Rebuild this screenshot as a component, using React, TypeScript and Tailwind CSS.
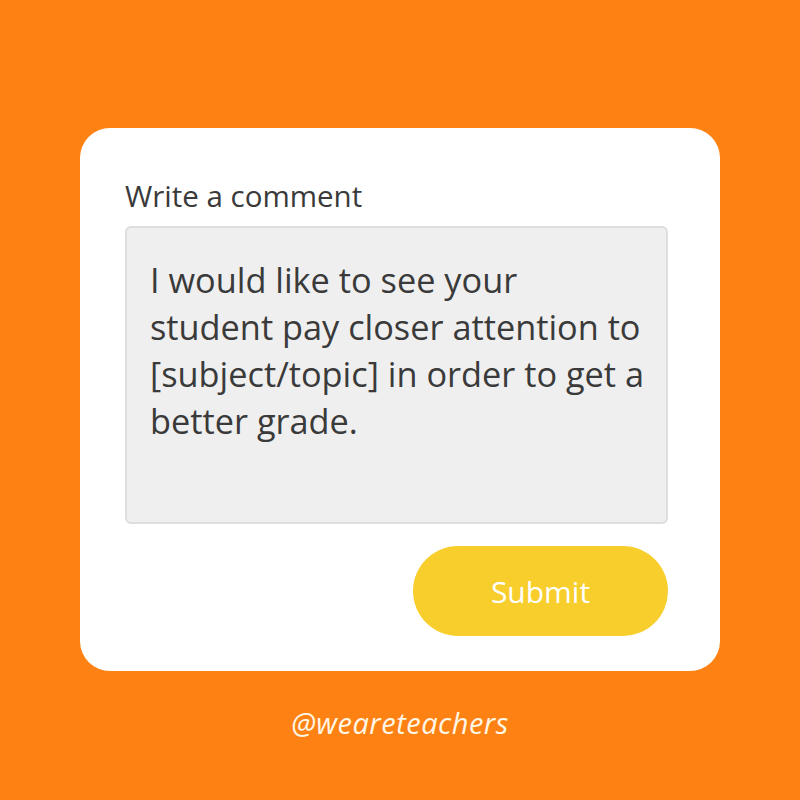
export default function App() {
  return (
    <div
      className="w-[800px] h-[800px] bg-[#fd8213] flex flex-col items-center pt-[128px]"
      style={{ fontFamily: '"Open Sans", "Liberation Sans", sans-serif' }}
    >
      <div className="w-[640px] h-[543px] bg-white rounded-[30px] pl-[45px] pr-[52px] pt-[50px] flex flex-col">
        <label className="text-[29.5px] leading-[36px] text-[#3a3a3a]">Write a comment</label>
        <div className="mt-[12px] h-[298px] bg-[#efefef] border-2 border-[#dedede] rounded-[6px] pl-[23px] pr-[10px] pt-[28px]">
          <p className="text-[34.3px] leading-[47px] text-[#3a3a3a] whitespace-nowrap">
            I would like to see your
            <br />
            student pay closer attention to
            <br />
            [subject/topic] in order to get a
            <br />
            better grade.
          </p>
        </div>
        <div className="flex justify-end mt-[22px]">
          <button className="w-[255px] h-[90px] rounded-full bg-[#f8ce2d] text-white text-[30px]">
            Submit
          </button>
        </div>
      </div>
      <div className="mt-[30px] text-[29px] text-[#fff6e6] italic tracking-[0.5px]">
        @weareteachers
      </div>
    </div>
  )
}
